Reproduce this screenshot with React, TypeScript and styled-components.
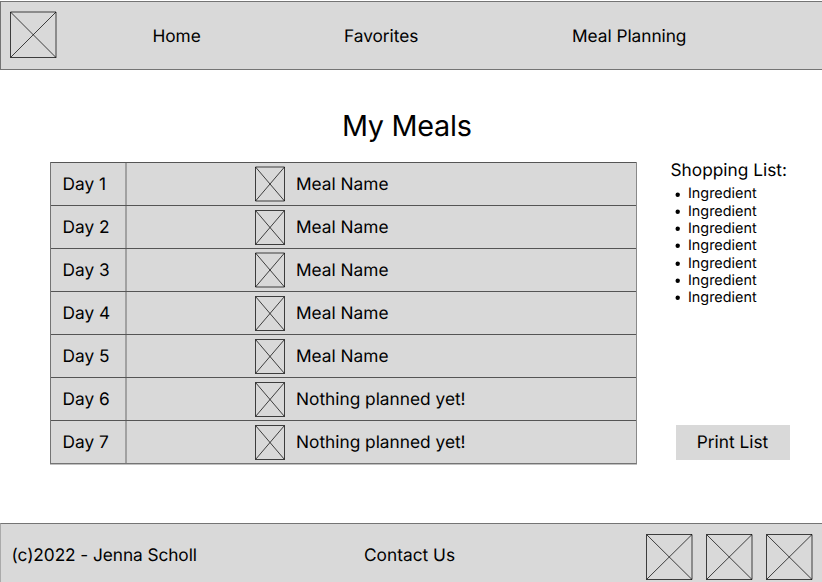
import React from "react";
import styled, { createGlobalStyle } from "styled-components";

const GlobalStyle = createGlobalStyle`
  * { box-sizing: border-box; }
  html, body { margin: 0; padding: 0; background: #fff; }
  body { overflow: hidden; }
`;

const Page = styled.div`
  width: 822px;
  height: 582px;
  padding-top: 1px;
  display: flex;
  flex-direction: column;
  overflow: hidden;
  font-family: Inter, sans-serif;
  font-size: 17.3px;
  line-height: 21px;
  color: #000;
  white-space: nowrap;
  text-rendering: geometricPrecision;
`;

const Header = styled.header`
  height: 69px;
  flex: none;
  display: grid;
  grid-template-columns: 142.5px 191.5px 228px 1fr;
  align-items: start;
  padding: 9px 0 0 9px;
  background: #d9d9d9;
  border: 1px solid #747474;
  border-right: 0;
`;

const NavItem = styled.a`
  padding-top: 15px;
  letter-spacing: -0.04px;
`;

const Main = styled.main`
  height: 453px;
  flex: none;
  display: grid;
  grid-template-columns: 587px 1fr;
  grid-template-rows: 92px 302px;
  padding-left: 50px;
`;

const Title = styled.h1`
  grid-column: 1 / -1;
  margin: 0;
  padding: 38px 0 0 292px;
  font-size: 28.8px;
  line-height: 35px;
  font-weight: 400;
  letter-spacing: -0.28px;
`;

const MealTable = styled.div`
  display: grid;
  grid-template-rows: repeat(7, 43px);
  background: #d9d9d9;
  border-left: 1px solid #747474;
  border-right: 1px solid #898989;
  border-bottom: 1px solid #747474;
  box-shadow: 0 1px #c0c0c0;
`;

const MealRow = styled.div`
  display: grid;
  grid-template-columns: 76px 128px 41px 1fr;
  border-top: 1px solid #555;
`;

const DayCell = styled.div`
  padding: 11px 0 0 11.5px;
  border-right: 2px solid #a1a1a1;
`;

const MealImage = styled.div`
  grid-column: 3;
  padding-top: 3px;
`;

const MealName = styled.div`
  padding-top: 11px;
`;

const Sidebar = styled.aside`
  display: flex;
  flex-direction: column;
  align-items: flex-start;
  padding: 0 0 4px 33.5px;
`;

const ListTitle = styled.h2`
  margin: -2px 0 4.4px;
  font-size: 17.3px;
  line-height: 21px;
  font-weight: 400;
`;

const List = styled.ul`
  list-style: none;
  margin: 0;
  padding: 0;
  font-size: 14.4px;
  line-height: 17.3px;
`;

const Ingredient = styled.li`
  display: flex;
  align-items: center;
`;

const Bullet = styled.svg`
  width: 17.5px;
  height: 17px;
  flex: none;
`;

const PrintButton = styled.button`
  margin: auto 0 0 5.5px;
  width: 114px;
  height: 35px;
  padding: 0 1px 1px 0;
  border: 0;
  background: #d9d9d9;
  color: #000;
  font: inherit;
  text-rendering: inherit;
`;

const Footer = styled.footer`
  height: 59px;
  flex: none;
  display: grid;
  grid-template-columns: 352.5px 282px 1fr;
  padding-left: 10.5px;
  background: #d9d9d9;
  border-top: 1px solid #747474;
  border-left: 1px solid #aaa;
`;

const FooterText = styled.div<{ $tracking?: number }>`
  padding-top: 21px;
  letter-spacing: ${({ $tracking = 0 }) => $tracking}px;
`;

const SocialLinks = styled.div`
  display: flex;
  gap: 13.5px;
  padding-top: 10px;
`;

const Crossed = styled.svg`
  display: block;
  flex: none;
  overflow: visible;
  fill: none;
  stroke: #000;
`;

interface PlaceholderProps {
  width: number;
  height: number;
  top?: number;
}

const Placeholder = ({ width, height, top = 0.5 }: PlaceholderProps) => {
  const right = width - 0.5;
  const bottom = height - 0.5;
  return (
    <Crossed width={width} height={height} strokeWidth={0.72} aria-hidden="true">
      <path d={`M.5 ${top}H${right}V${bottom}H.5ZL${right} ${bottom}M${right} ${top}L.5 ${bottom}`} />
    </Crossed>
  );
};

const meals = [
  { name: "Meal Name", top: 1, height: 35.5 },
  { name: "Meal Name", top: 1.5, height: 36 },
  { name: "Meal Name", top: 1, height: 35.5 },
  { name: "Meal Name", top: 1.5, height: 36 },
  { name: "Meal Name", top: 1.5, height: 36 },
  { name: "Nothing planned yet!", top: 1.5, height: 36 },
  { name: "Nothing planned yet!", top: 1.5, height: 36 },
];

export default function App() {
  return (
    <>
      <GlobalStyle />
      <Page>
        <Header>
          <Placeholder width={46.5} height={47} top={1} />
          <NavItem>Home</NavItem>
          <NavItem>Favorites</NavItem>
          <NavItem>Meal Planning</NavItem>
        </Header>
        <Main>
          <Title>My Meals</Title>
          <MealTable>
            {meals.map((meal, i) => (
              <MealRow key={i}>
                <DayCell>Day {i + 1}</DayCell>
                <MealImage>
                  <Placeholder width={30} height={meal.height} top={meal.top} />
                </MealImage>
                <MealName>{meal.name}</MealName>
              </MealRow>
            ))}
          </MealTable>
          <Sidebar>
            <ListTitle>Shopping List:</ListTitle>
            <List>
              {Array.from({ length: 7 }, (_, i) => (
                <Ingredient key={i}>
                  <Bullet viewBox="0 0 17.5 17" aria-hidden="true">
                    <circle cx="6.7" cy="8.7" r="2.2" />
                  </Bullet>
                  Ingredient
                </Ingredient>
              ))}
            </List>
            <PrintButton>Print List</PrintButton>
          </Sidebar>
        </Main>
        <Footer>
          <FooterText $tracking={-0.08}>(c)2022 - Jenna Scholl</FooterText>
          <FooterText>Contact Us</FooterText>
          <SocialLinks>
            <Placeholder width={46.5} height={46} />
            <Placeholder width={46.5} height={46} />
            <Placeholder width={46.5} height={46} />
          </SocialLinks>
        </Footer>
      </Page>
    </>
  );
}
